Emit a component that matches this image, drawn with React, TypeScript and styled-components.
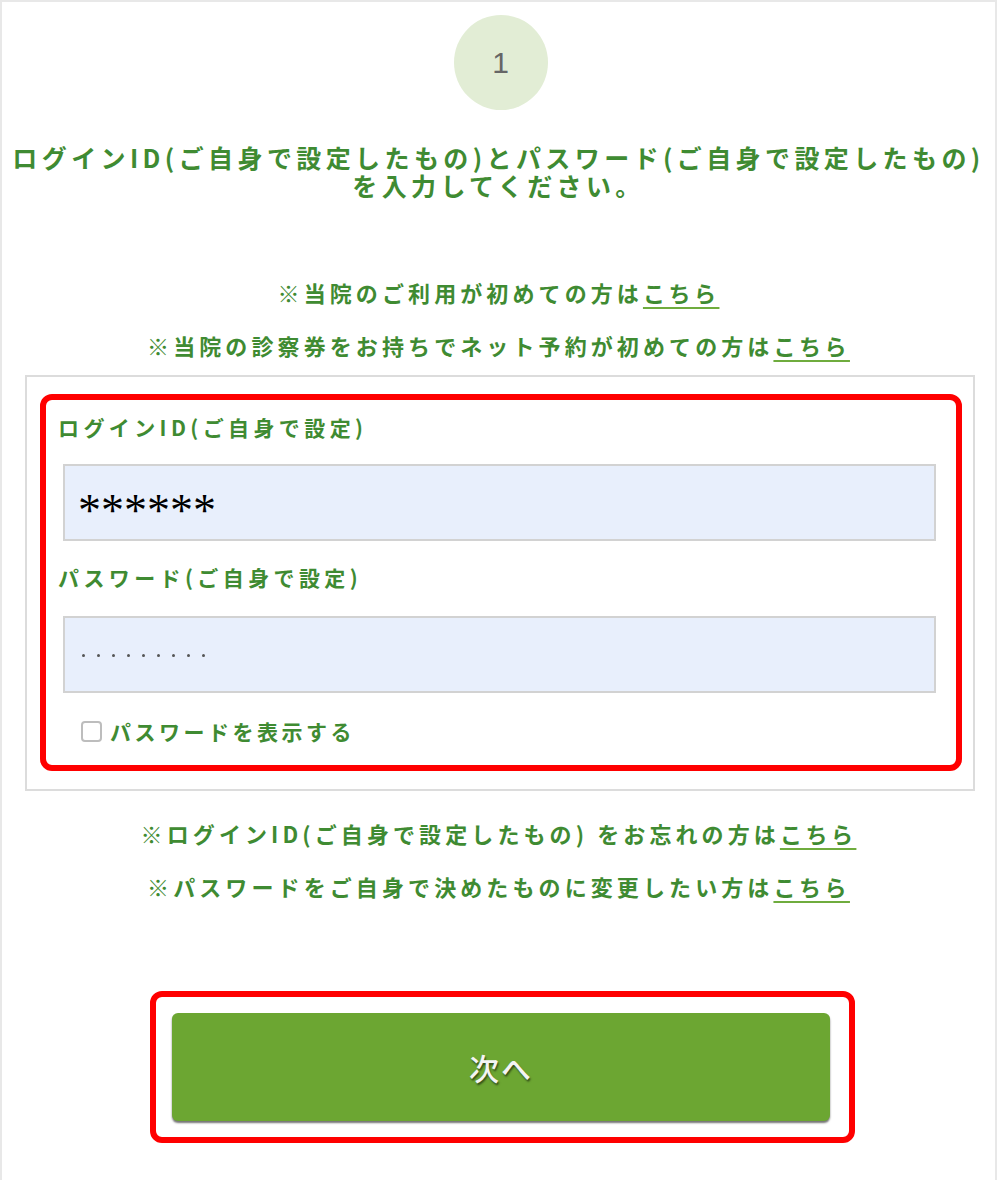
import React from "react";
import styled, { createGlobalStyle } from "styled-components";

const GREEN = "#3f8b32";
const JP = `"Noto Sans CJK JP", "Noto Sans", sans-serif`;

const Global = createGlobalStyle`
  html, body { margin: 0; padding: 0; background: #fff; }
  body { font-family: ${JP}; }
`;

const Frame = styled.div`
  box-sizing: border-box;
  width: 997px;
  min-height: 1180px;
  border-top: 2px solid #e8e8e8;
  border-left: 2px solid #e8e8e8;
  border-right: 2px solid #e8e8e8;
  padding-top: 13px;
  display: flex;
  flex-direction: column;
`;

const StepCircle = styled.div`
  width: 94px;
  height: 95px;
  border-radius: 50%;
  background: #e2edd5;
  align-self: center;
  margin-left: 4px;
  display: flex;
  align-items: center;
  justify-content: center;
  color: #666;
  font-family: "Liberation Sans", sans-serif;
  font-size: 30px;
  font-weight: 300;
`;

const Heading = styled.h1`
  margin: 33px 0 0;
  text-align: center;
  color: ${GREEN};
  font-family: ${JP};
  font-weight: 700;
  font-size: 25px;
  letter-spacing: 4.4px;
  line-height: 28px;
`;

const Notes = styled.div<{ $top: number }>`
  margin-top: ${(p) => p.$top}px;
  display: flex;
  flex-direction: column;
  align-items: center;
  gap: 23px;
`;

const Note = styled.p`
  margin: 0;
  color: ${GREEN};
  font-weight: 700;
  font-size: 22px;
  letter-spacing: 4.1px;
  line-height: 30px;
  white-space: nowrap;
`;

const Link = styled.a`
  color: ${GREEN};
  text-decoration: underline;
  text-decoration-color: #6fac3e;
  text-decoration-thickness: 2px;
  text-underline-offset: 5px;
  letter-spacing: 3.5px;
`;

const FormBox = styled.div`
  box-sizing: border-box;
  margin: 15px 20px 0 23px;
  border: 2px solid #dcdcdc;
  padding: 17px 11px 18px 13px;
`;

const Highlight = styled.div`
  border: 6px solid #ff0000;
  border-radius: 12px;
`;

const FieldArea = styled.div`
  padding: 12px 20px 19px 12px;
  display: flex;
  flex-direction: column;
`;

const Label = styled.label<{ $gapTop?: number }>`
  margin-top: ${(p) => p.$gapTop ?? 0}px;
  color: ${GREEN};
  font-weight: 700;
  font-size: 21px;
  letter-spacing: 4.4px;
  line-height: 30px;
`;

const InputBox = styled.div<{ $gapTop: number }>`
  box-sizing: border-box;
  margin: ${(p) => p.$gapTop}px 0 0 5px;
  height: 77px;
  background: #e8effc;
  border: 2px solid #d2d2d2;
  display: flex;
  align-items: center;
  padding-left: 13px;
`;

const IdValue = styled.span`
  font-family: "Liberation Serif", serif;
  font-size: 46px;
  color: #000;
  line-height: 1;
  padding-top: 16px;
`;

const Dots = styled.span`
  display: flex;
  gap: 12px;
  padding-left: 4px;
  padding-top: 2px;
`;

const Dot = styled.span`
  width: 3px;
  height: 3px;
  border-radius: 50%;
  background: #555;
`;

const CheckRow = styled.div`
  margin: 23px 0 0 20px;
  display: flex;
  align-items: center;
  gap: 8px;
  height: 30px;
`;

const CheckBox = styled.span`
  box-sizing: border-box;
  width: 21px;
  height: 21px;
  margin-left: 3px;
  border: 2px solid #bdbdbd;
  border-radius: 4px;
  background: #fff;
`;

const CheckLabel = styled.span`
  color: ${GREEN};
  font-weight: 700;
  font-size: 21px;
  letter-spacing: 3.5px;
  line-height: 30px;
`;

const ButtonFrame = styled.div`
  box-sizing: border-box;
  margin: 90px 0 0 148px;
  width: 705px;
  border: 6px solid #ff0000;
  border-radius: 12px;
  padding: 16px 19px 16px 16px;
`;

const NextButton = styled.button`
  display: flex;
  align-items: center;
  justify-content: center;
  width: 100%;
  height: 108px;
  border: none;
  border-radius: 6px;
  background: #6ca632;
  box-shadow: 0 2px 2px rgba(0, 0, 0, 0.55);
  color: #f4f4f4;
  font-family: ${JP};
  font-size: 30px;
  font-weight: 500;
  letter-spacing: 2px;
  text-shadow: 1px 2px 2px rgba(0, 0, 0, 0.55);
  cursor: pointer;
`;

export default function App() {
  return (
    <>
      <Global />
      <Frame>
        <StepCircle>1</StepCircle>
        <Heading>
          ログインID(ご自身で設定したもの)とパスワード(ご自身で設定したもの)
          <br />
          を入力してください。
        </Heading>
        <Notes $top={78}>
          <Note>
            ※当院のご利用が初めての方は<Link href="#">こちら</Link>
          </Note>
          <Note>
            ※当院の診察券をお持ちでネット予約が初めての方は<Link href="#">こちら</Link>
          </Note>
        </Notes>
        <FormBox>
          <Highlight>
            <FieldArea>
              <Label>ログインID(ご自身で設定)</Label>
              <InputBox $gapTop={22}>
                <IdValue>******</IdValue>
              </InputBox>
              <Label $gapTop={21}>パスワード(ご自身で設定)</Label>
              <InputBox $gapTop={24}>
                <Dots>
                  {Array.from({ length: 9 }).map((_, i) => (
                    <Dot key={i} />
                  ))}
                </Dots>
              </InputBox>
              <CheckRow>
                <CheckBox />
                <CheckLabel>パスワードを表示する</CheckLabel>
              </CheckRow>
            </FieldArea>
          </Highlight>
        </FormBox>
        <Notes $top={27}>
          <Note>
            ※ログインID(ご自身で設定したもの) をお忘れの方は<Link href="#">こちら</Link>
          </Note>
          <Note>
            ※パスワードをご自身で決めたものに変更したい方は<Link href="#">こちら</Link>
          </Note>
        </Notes>
        <ButtonFrame>
          <NextButton>次へ</NextButton>
        </ButtonFrame>
      </Frame>
    </>
  );
}
